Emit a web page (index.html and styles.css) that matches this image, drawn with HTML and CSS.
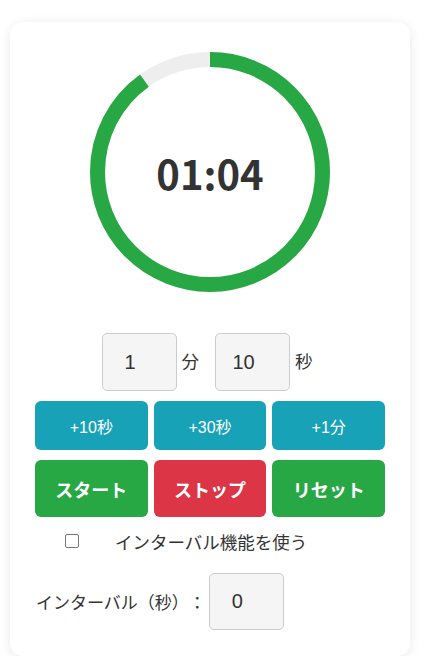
FILE: index.html
```html
<!DOCTYPE html>
<html lang="ja">
<head>
<meta charset="utf-8">
<title>タイマー</title>
<link rel="stylesheet" href="styles.css">
</head>
<body>
<div class="card">
  <div class="dial">
    <svg class="ring" width="240" height="240" viewBox="0 0 240 240">
      <circle cx="120" cy="120" r="112.5" fill="none" stroke="#eeeeee" stroke-width="15"/>
      <circle cx="120" cy="120" r="112.5" fill="none" stroke="#28a745" stroke-width="15"
        stroke-dasharray="636.17 706.86" transform="rotate(-90 120 120)"/>
    </svg>
    <div class="time">01:04</div>
  </div>

  <div class="set-row">
    <input class="num" type="text" value="1">
    <span class="unit unit-min">分</span>
    <input class="num" type="text" value="10">
    <span class="unit unit-sec">秒</span>
  </div>

  <div class="btn-grid">
    <button class="btn btn-add">+10秒</button>
    <button class="btn btn-add">+30秒</button>
    <button class="btn btn-add">+1分</button>
  </div>

  <div class="btn-grid btn-grid-main">
    <button class="btn btn-main btn-green">スタート</button>
    <button class="btn btn-main btn-red">ストップ</button>
    <button class="btn btn-main btn-green">リセット</button>
  </div>

  <label class="check-row">
    <span class="box"></span>
    <span class="check-text">インターバル機能を使う</span>
  </label>

  <div class="interval-row">
    <span class="interval-label">インターバル（秒）：</span>
    <input class="num" type="text" value="0">
  </div>
</div>
</body>
</html>
```

FILE: styles.css
```css
html, body {
  margin: 0;
  padding: 0;
  background: #ffffff;
}

body {
  font-family: "Noto Sans CJK JP", "Liberation Sans", sans-serif;
  color: #333333;
  padding: 22px 0 0 10px;
  text-spacing-trim: space-all;
}

.card {
  width: 400px;
  box-sizing: border-box;
  padding: 30px 25px 26px;
  background: #ffffff;
  border-radius: 13px;
  box-shadow: 0 2px 12px rgba(0, 0, 0, 0.09);
  display: flex;
  flex-direction: column;
}

.dial {
  position: relative;
  width: 240px;
  height: 240px;
  align-self: center;
}

.ring {
  display: block;
}

.time {
  position: absolute;
  left: 0;
  right: 0;
  top: 0;
  bottom: 0;
  display: flex;
  align-items: center;
  justify-content: center;
  font-family: "Noto Sans CJK JP", sans-serif;
  font-weight: 700;
  font-size: 40px;
  color: #333333;
  padding-top: 2px;
}

.set-row {
  margin-top: 41px;
  display: flex;
  align-items: center;
  justify-content: center;
}

.num {
  width: 75px;
  height: 58px;
  box-sizing: border-box;
  border: 1px solid #cccccc;
  border-radius: 5px;
  background: #f5f5f5;
  font-family: "Liberation Sans", Arial, sans-serif;
  font-size: 20px;
  color: #333333;
  text-align: center;
  padding: 0 18px 0 0;
  margin: 0;
  outline: none;
}

.unit {
  font-size: 17.5px;
  color: #333333;
  line-height: 1;
}

.unit-min {
  margin: -2px 16px 0 5px;
}

.unit-sec {
  margin: -2px 6px 0 5px;
}

.btn-grid {
  margin-top: 10px;
  display: grid;
  grid-template-columns: repeat(3, 1fr);
  column-gap: 6px;
}

.btn {
  border: none;
  border-radius: 6px;
  color: #ffffff;
  font-family: "Liberation Sans", "Noto Sans CJK JP", sans-serif;
  padding: 0;
  margin: 0;
}

.btn-add {
  height: 49px;
  background: #17a2b8;
  font-size: 16px;
}

.btn-main {
  height: 57px;
  font-size: 18px;
  font-weight: 700;
  font-family: "Noto Sans CJK JP", sans-serif;
}

.btn-green {
  background: #28a745;
}

.btn-red {
  background: #dc3545;
}

.check-row {
  margin-top: 17px;
  display: flex;
  align-items: center;
  padding-left: 30px;
  height: 14px;
}

.box {
  width: 12px;
  height: 12px;
  border: 1px solid #767676;
  border-radius: 2px;
  background: #ffffff;
  flex: none;
}

.check-text {
  margin-left: 36px;
  font-size: 17.5px;
  color: #333333;
}

.interval-row {
  margin-top: 25px;
  display: flex;
  align-items: center;
  padding-left: 1px;
}

.interval-label {
  font-size: 17px;
  color: #333333;
}

.interval-row .num {
  height: 57px;
  margin-left: 3px;
}
```
